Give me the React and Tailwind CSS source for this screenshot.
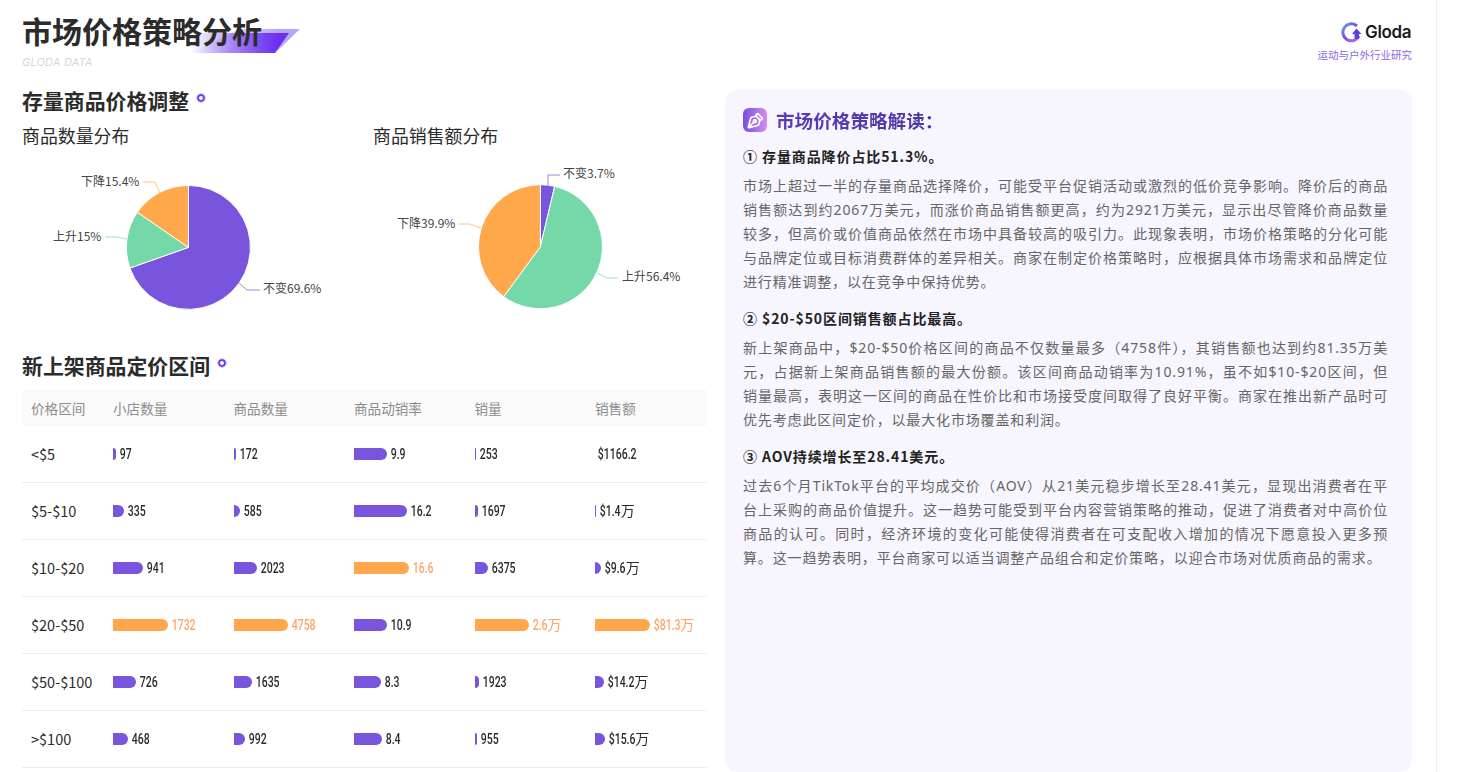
import { PenTool } from "lucide-react"

const CJK = "font-['Noto_Sans_CJK_SC','Noto_Sans',sans-serif]"

const rows = [
    { range: "<$5", cells: [[97, 3], [172, 2], [9.9, 33], [253, 1], ["$1166.2", 0]] },
    { range: "$5-$10", cells: [[335, 11], [585, 6], [16.2, 53], [1697, 3], ["$1.4万", 1]] },
    { range: "$10-$20", cells: [[941, 30], [2023, 23], [16.6, 55, true], [6375, 13], ["$9.6万", 6]] },
    { range: "$20-$50", cells: [[1732, 55, true], [4758, 54, true], [10.9, 33], ["2.6万", 54, true], ["$81.3万", 55, true]] },
    { range: "$50-$100", cells: [[726, 23], [1635, 18], [8.3, 27], [1923, 4], ["$14.2万", 9]] },
    { range: ">$100", cells: [[468, 15], [992, 11], [8.4, 28], [955, 2], ["$15.6万", 10]] },
]

const headers = ["价格区间", "小店数量", "商品数量", "商品动销率", "销量", "销售额"]

const sections = [
    {
        title: "① 存量商品降价占比51.3%。",
        text: "市场上超过一半的存量商品选择降价\uFF0C可能受平台促销活动或激烈的低价竞争影响。降价后的商品销售额达到约2067万美元\uFF0C而涨价商品销售额更高\uFF0C约为2921万美元\uFF0C显示出尽管降价商品数量较多\uFF0C但高价或价值商品依然在市场中具备较高的吸引力。此现象表明\uFF0C市场价格策略的分化可能与品牌定位或目标消费群体的差异相关。商家在制定价格策略时\uFF0C应根据具体市场需求和品牌定位进行精准调整\uFF0C以在竞争中保持优势。",
    },
    {
        title: "② $20-$50区间销售额占比最高。",
        text: "新上架商品中\uFF0C$20-$50价格区间的商品不仅数量最多\uFF084758件\uFF09\uFF0C其销售额也达到约81.35万美元\uFF0C占据新上架商品销售额的最大份额。该区间商品动销率为10.91%\uFF0C虽不如$10-$20区间\uFF0C但销量最高\uFF0C表明这一区间的商品在性价比和市场接受度间取得了良好平衡。商家在推出新产品时可优先考虑此区间定价\uFF0C以最大化市场覆盖和利润。",
    },
    {
        title: "③ AOV持续增长至28.41美元。",
        text: "过去6个月TikTok平台的平均成交价\uFF08AOV\uFF09从21美元稳步增长至28.41美元\uFF0C显现出消费者在平台上采购的商品价值提升。这一趋势可能受到平台内容营销策略的推动\uFF0C促进了消费者对中高价位商品的认可。同时\uFF0C经济环境的变化可能使得消费者在可支配收入增加的情况下愿意投入更多预算。这一趋势表明\uFF0C平台商家可以适当调整产品组合和定价策略\uFF0C以迎合市场对优质商品的需求。",
    },
]

const COLORS = { purple: "#7855dc", green: "#74d8a8", orange: "#ffa84c" }

const slicePath = (cx, cy, r, from, to) => {
    const a = (from / 100) * 2 * Math.PI
    const b = (to / 100) * 2 * Math.PI
    const large = to - from > 50 ? 1 : 0
    return `M${cx} ${cy}L${cx + r * Math.sin(a)} ${cy - r * Math.cos(a)}A${r} ${r} 0 ${large} 1 ${cx + r * Math.sin(b)} ${cy - r * Math.cos(b)}Z`
}

const Pie = ({ cx, cy, r, viewBox, width, slices }) => {
    let start = 0
    return (
        <svg width={width} height="190" viewBox={viewBox} className="block">
            {slices.map(s => {
                const d = slicePath(cx, cy, r, start, start + s.value)
                start += s.value
                return <path key={s.color} d={d} fill={COLORS[s.color]} stroke="#fff" strokeWidth="1" />
            })}
            {slices.map(s => (
                <g key={s.label}>
                    <polyline points={s.line} fill="none" stroke={COLORS[s.color]} strokeOpacity="0.7" strokeWidth="1" />
                    <text x={s.x} y={s.y} fontSize="12" fill="#444" fontFamily="'Noto Sans CJK SC', sans-serif">{s.label}</text>
                </g>
            ))}
        </svg>
    )
}

const Dot = () => <span className="mb-1 ml-2 inline-block size-2 rounded-full border-2 border-[#6b3df5] bg-white outline outline-[#d9cffc]" />

const SectionTitle = ({ children }) => (
    <h2 className="flex h-6 items-center text-[20.9px] leading-6 font-bold text-[#2b2b2b]">
        {children}
        <Dot />
    </h2>
)

const Header = () => (
    <div className="flex h-[90px] justify-between pr-[24px]">
        <div className="relative pt-[10px]">
            <svg width="110" height="24" viewBox="0 0 110 24" className="absolute top-[29px] left-[168px]">
                <defs>
                    <linearGradient id="titleBar" x1="0" x2="1" y1="0" y2="0">
                        <stop offset="0" stopColor="#6a2ff0" stopOpacity="0" />
                        <stop offset="0.9" stopColor="#6a2ff0" />
                    </linearGradient>
                    <linearGradient id="titleBack" x1="0" x2="1" y1="0" y2="0">
                        <stop offset="0" stopColor="#b9a5fa" stopOpacity="0" />
                        <stop offset="0.8" stopColor="#b9a5fa" />
                    </linearGradient>
                </defs>
                <polygon points="50,0 110,0 85,24 0,24" fill="url(#titleBack)" />
                <polygon points="0,4 99,4 85,24 0,24" fill="url(#titleBar)" />
            </svg>
            <h1 className="relative text-[30px] leading-[40px] font-bold text-[#2b2b2b]">市场价格策略分析</h1>
            <p className="mt-[5px] font-['Inter',sans-serif] text-[11px] leading-[14px] tracking-[0.2px] text-[#d8d8dc] italic">GLODA DATA</p>
        </div>
        <div className="flex flex-col items-end pt-[22px]">
            <div className="flex h-[22px] items-center gap-[3px]">
                <svg width="22" height="22" viewBox="0 0 22 22">
                    <defs>
                        <linearGradient id="logoRing" x1="0" x2="1" y1="0" y2="1">
                            <stop offset="0" stopColor="#5aa4e8" />
                            <stop offset="0.45" stopColor="#7a4fe6" />
                            <stop offset="1" stopColor="#c26ee8" />
                        </linearGradient>
                    </defs>
                    <path d="M16 3.2A8.5 8.5 0 1 0 18.5 15" fill="none" stroke="url(#logoRing)" strokeWidth="3" strokeLinecap="round" />
                    <path d="M16.5 6.5L21.5 12H19V17H14.5V12H12Z" fill="#5b44d8" />
                </svg>
                <span className="pr-[1px] font-['Inter',sans-serif] text-[17px] font-semibold tracking-[-0.4px] text-[#1b1b1b]">Gloda</span>
            </div>
            <p className="mt-[4px] text-[10.5px] leading-[14px] text-[#8a68e2]">运动与户外行业研究</p>
        </div>
    </div>
)

const Charts = () => (
    <div className="flex">
        <div className="w-[351px]">
            <h3 className="mt-[11px] text-[17.9px] leading-6 text-[#2b2b2b]">商品数量分布</h3>
            <div className="mt-[8px]">
                <Pie
                    cx={188.4} cy={247.4} r={62} width="351" viewBox="22 155 351 190"
                    slices={[
                        { value: 69.6, color: "purple", label: "不变69.6%", x: 263, y: 293, line: "239,283 247,290 260,290" },
                        { value: 15, color: "green", label: "上升15%", x: 53, y: 241, line: "105,237 117,237 127,239" },
                        { value: 15.4, color: "orange", label: "下降15.4%", x: 81, y: 186, line: "143,182 155,182 160,193" },
                    ]}
                />
            </div>
        </div>
        <div className="w-[334px]">
            <h3 className="mt-[11px] text-[17.9px] leading-6 text-[#2b2b2b]">商品销售额分布</h3>
            <div className="mt-[8px]">
                <Pie
                    cx={540.4} cy={246.7} r={62} width="334" viewBox="373 155 334 190"
                    slices={[
                        { value: 3.7, color: "purple", label: "不变3.7%", x: 563, y: 178, line: "548,186 548,175 560,175" },
                        { value: 56.4, color: "green", label: "上升56.4%", x: 622, y: 281, line: "597,273 607,278 618,278" },
                        { value: 39.9, color: "orange", label: "下降39.9%", x: 397, y: 228, line: "481,228 470,224 459,224" },
                    ]}
                />
            </div>
        </div>
    </div>
)

// numbers in the shot are a condensed face, so squeeze Roboto; 万 keeps its normal width
const BarCell = ({ cell }) => {
    const [value, width, hot] = cell
    const text = String(value)
    const hasWan = text.endsWith("万")
    return (
        <div className="flex items-center pl-[9px]">
            {width > 0 && (
                <span
                    className={`mr-[3px] h-3 rounded-r-[6px] ${hot ? "bg-[#ffa74a]" : "bg-[#7855dc]"}`}
                    style={{ width }}
                />
            )}
            <span className={`inline-block origin-left scale-x-[0.7] pl-[1px] font-['Roboto',sans-serif] text-[15px] font-medium whitespace-nowrap ${hot ? "text-[#ffa566]" : "text-[#2b2b2b]"} ${width === 0 ? "pl-[4px]" : ""}`}>
                {hasWan ? text.slice(0, -1) : text}
                {hasWan && <span className={`inline-block origin-left scale-x-[1.43] text-[14px] font-normal ${CJK}`}>万</span>}
            </span>
        </div>
    )
}

const PriceTable = () => (
    <div className="mt-[13px]">
        <div className="grid h-9 grid-cols-[82px_repeat(5,120.5px)] items-center bg-[#fafafa] text-[13.6px] text-[#8c8c8c]">
            {headers.map(h => (
                <div key={h} className="pl-[9px]">{h}</div>
            ))}
        </div>
        {rows.map(row => (
            <div key={row.range} className="grid h-[57px] grid-cols-[82px_repeat(5,120.5px)] items-center border-b border-[#ececec]">
                <div className="pl-[9px] text-[14.5px] text-[#2b2b2b]">{row.range}</div>
                {row.cells.map((cell, i) => (
                    <BarCell key={i} cell={cell} />
                ))}
            </div>
        ))}
    </div>
)

const Insight = () => (
    <div className="h-[682px] w-[687px] rounded-xl bg-[#f7f5fd] pt-[18px] pr-[24px] pl-[18px]">
        <div className="mb-[12px] flex h-6 items-center gap-[9px]">
            <span className="flex size-6 items-center justify-center rounded-md bg-gradient-to-r from-[#7650dc] to-[#d58cf0]">
                <PenTool className="size-[17px] -scale-y-100 text-white" strokeWidth={2.4} />
            </span>
            <h2 className="bg-gradient-to-r from-[#5a3ab8] to-[#4d3aa0] bg-clip-text text-[18.6px] leading-6 font-bold text-transparent">市场价格策略解读{"\uFF1A"}</h2>
        </div>
        {sections.map(s => (
            <div key={s.title} className="mb-[12px]">
                <h3 className="mb-[6px] text-[14px] leading-6 font-bold tracking-[0.9px] text-[#222]">{s.title}</h3>
                <p className="text-justify font-['Noto_Sans','Noto_Sans_CJK_SC',sans-serif] text-[14px] leading-6 tracking-[0.85px] text-[#666]">{s.text}</p>
            </div>
        ))}
    </div>
)

export default function App() {
    return (
        <div className={`h-[772px] w-[1437px] overflow-hidden border-r border-[#eeeeee] bg-white pl-[22px] ${CJK}`}>
            <Header />
            <div className="flex gap-[18px]">
                <div className="-mt-[2px] w-[685px]">
                    <SectionTitle>存量商品价格调整</SectionTitle>
                    <Charts />
                    <div className="mt-[8px]">
                        <SectionTitle>新上架商品定价区间</SectionTitle>
                    </div>
                    <PriceTable />
                </div>
                <Insight />
            </div>
        </div>
    )
}
